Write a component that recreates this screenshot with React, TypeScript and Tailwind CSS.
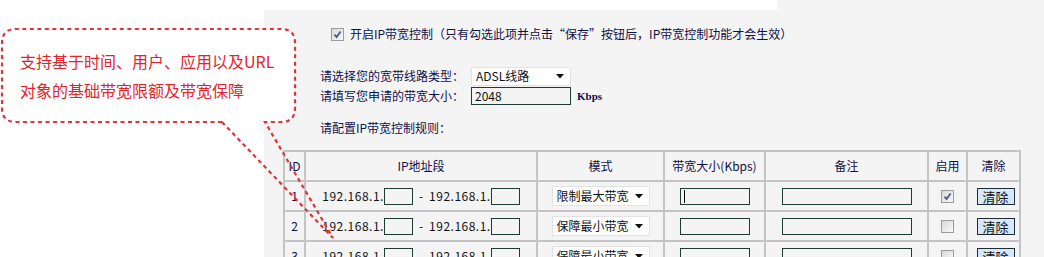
import React from 'react'

const rows = [
  { id: 1, mode: '限制最大带宽', checked: true, caret: true },
  { id: 2, mode: '保障最小带宽', checked: false, caret: false },
  { id: 3, mode: '保障最小带宽', checked: false, caret: false },
]

const Check = ({ checked = false }: { checked?: boolean }) => (
  <span className="inline-flex w-[13px] h-[13px] shrink-0 items-center justify-center border border-[#9c9c9c] bg-linear-to-br from-[#d8d8d8] to-[#fafafa]">
    {checked && (
      <svg width="9" height="9" viewBox="0 0 9 9">
        <path d="M1.5 4.6 L3.6 7 L7.6 1.4" stroke="#4a5890" strokeWidth="1.8" fill="none" />
      </svg>
    )}
  </span>
)

const Arrow = () => (
  <svg width="8" height="5" viewBox="0 0 8 5">
    <path d="M0 0 H8 L4 4.5 Z" fill="#111" />
  </svg>
)

const IpBox = () => <span className="inline-block w-[29px] h-[17px] border border-[#1d3a33]" />

const App = () => {
  return (
    <div className="relative w-[1044px] h-[257px] overflow-hidden bg-white text-[12px] text-[#10104a] font-['Noto_Sans_CJK_SC',sans-serif]">
      {/* top strip */}
      <div className="flex h-[10px]">
        <div className="w-[777px] bg-white" />
        <div className="flex-1 bg-[#f4f4f4]" />
      </div>

      <div className="flex h-[247px]">
        <div className="w-[264px] bg-white" />
        <div className="flex-1 bg-[#f4f4f4] pt-[14px] overflow-hidden">
          <div className="h-[20px] ml-[67px] flex items-center gap-[6px] leading-none">
            <Check checked />
            <span>开启IP带宽控制（只有勾选此项并点击“保存”按钮后，IP带宽控制功能才会生效）</span>
          </div>

          <div className="mt-[22px] h-[20px] ml-[56px] flex items-center leading-none">
            <span className="w-[151px]">请选择您的宽带线路类型：</span>
            <div className="w-[100px] h-[19px] bg-white border border-[#e2e2e2] flex items-center justify-between pl-[4px] pr-[6px] text-[#111]">
              <span>ADSL线路</span>
              <Arrow />
            </div>
          </div>

          <div className="mt-[1px] h-[18px] ml-[56px] flex items-center leading-none">
            <span className="w-[151px]">请填写您申请的带宽大小：</span>
            <div className="w-[100px] h-[18px] border border-[#1d3a33] flex items-center pl-[3px] text-[#111]">2048</div>
            <span className="ml-[6px] text-[11px] font-bold font-['Liberation_Serif',serif]">Kbps</span>
          </div>

          <div className="mt-[15px] h-[16px] ml-[56px] flex items-center leading-none">请配置IP带宽控制规则：</div>

          <table className="mt-[14px] ml-[19px] w-[736px] table-fixed border-collapse leading-none">
            <colgroup>
              <col className="w-[21px]" />
              <col className="w-[232px]" />
              <col className="w-[127px]" />
              <col className="w-[101px]" />
              <col className="w-[163px]" />
              <col className="w-[39px]" />
              <col className="w-[53px]" />
            </colgroup>
            <thead>
              <tr className="h-[30px]">
                {['ID', 'IP地址段', '模式', '带宽大小(Kbps)', '备注', '启用', '清除'].map((h) => (
                  <th key={h} className="border-2 border-[#c4c4c4] font-normal text-center p-0 whitespace-nowrap">
                    {h}
                  </th>
                ))}
              </tr>
            </thead>
            <tbody>
              {rows.map((r) => (
                <tr key={r.id} className="h-[30px]">
                  <td className="border-2 border-[#c4c4c4] text-center p-0">{r.id}</td>
                  <td className="border-2 border-[#c4c4c4] p-0">
                    <div className="flex items-center justify-center text-[#111]">
                      <span className="tracking-[0.5px]">192.168.1.</span>
                      <IpBox />
                      <span className="mx-[6px]">-</span>
                      <span className="tracking-[0.5px]">192.168.1.</span>
                      <IpBox />
                    </div>
                  </td>
                  <td className="border-2 border-[#c4c4c4] p-0">
                    <div className="mx-auto w-[98px] h-[20px] bg-white border border-[#e2e2e2] flex items-center justify-between pl-[4px] pr-[6px] text-[#111]">
                      <span>{r.mode}</span>
                      <Arrow />
                    </div>
                  </td>
                  <td className="border-2 border-[#c4c4c4] p-0">
                    <div className="mx-auto w-[70px] h-[17px] border border-[#1d3a33] flex items-center pl-[3px]">
                      {r.caret && <span className="w-[1px] h-[13px] bg-black" />}
                    </div>
                  </td>
                  <td className="border-2 border-[#c4c4c4] p-0">
                    <div className="mx-auto w-[130px] h-[17px] border border-[#1d3a33]" />
                  </td>
                  <td className="border-2 border-[#c4c4c4] p-0">
                    <div className="flex justify-center">
                      <Check checked={r.checked} />
                    </div>
                  </td>
                  <td className="border-2 border-[#c4c4c4] p-0">
                    <div className="flex justify-center pl-[4px]">
                      <button className="w-[38px] h-[17px] border border-[#1b2b38] bg-[#d6e8fa] text-[13px] leading-none text-[#111]">
                        清除
                      </button>
                    </div>
                  </td>
                </tr>
              ))}
            </tbody>
          </table>
        </div>
      </div>

      {/* callout bubble */}
      <div className="absolute left-0 top-0 w-[340px] h-[257px] pointer-events-none">
        <svg className="absolute left-0 top-0" width="340" height="257" viewBox="0 0 340 257">
          <path
            d="M16 29 H281 Q295 29 295 43 V108 Q295 122 281 122 H16 Q2 122 2 108 V43 Q2 29 16 29 Z"
            fill="white"
            stroke="none"
          />
          <path
            d="M222 122 H16 Q2 122 2 108 V43 Q2 29 16 29 H281 Q295 29 295 43 V108 Q295 122 281 122 H265 L333 238 M222 122 L333 238"
            fill="none"
            stroke="#e5323a"
            strokeWidth="2.2"
            strokeDasharray="4 3.5"
          />
        </svg>
        <div className="relative pt-[47px] pl-[20px] text-[16px] leading-[29px] text-[#e3232c]">
          <div>支持基于时间、用户、应用以及URL</div>
          <div>对象的基础带宽限额及带宽保障</div>
        </div>
      </div>
    </div>
  )
}

export default App
